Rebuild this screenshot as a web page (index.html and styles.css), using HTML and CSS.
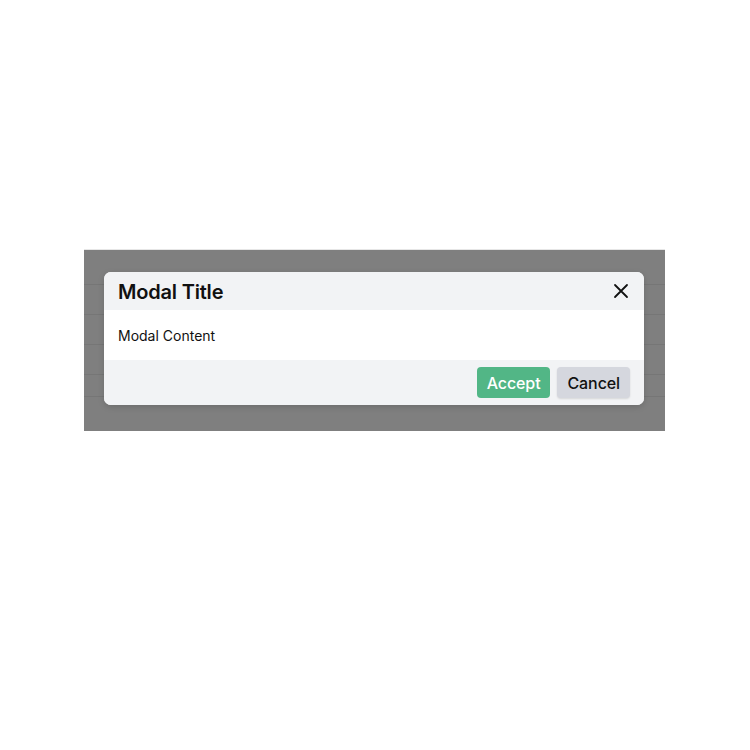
FILE: index.html
```html
<!DOCTYPE html>
<html lang="en">

<head>
    <meta charset="UTF-8">
    <meta name="viewport" content="width=device-width, initial-scale=1.0">
    <title>Modal</title>
    <link rel="stylesheet" href="styles.css">
</head>

<body>
    <div class="stage">
        <!-- table rows behind the backdrop -->
        <div class="rows">
            <div class="row row-head"></div>
            <div class="row"></div>
            <div class="row"></div>
            <div class="row"></div>
            <div class="row row-last"></div>
        </div>

        <div class="backdrop">
            <div class="modal">
                <div class="modal-header">
                    <h2>Modal Title</h2>
                    <button class="close-btn" aria-label="Close">
                        <svg width="16" height="16" viewBox="0 0 16 16">
                            <path d="M2 2 L14 14 M14 2 L2 14" stroke="#111" stroke-width="1.8" stroke-linecap="round" />
                        </svg>
                    </button>
                </div>
                <div class="modal-body">Modal Content</div>
                <div class="modal-footer">
                    <button class="btn btn-accept">Accept</button>
                    <button class="btn btn-cancel">Cancel</button>
                </div>
            </div>
        </div>
    </div>
</body>

</html>
```

FILE: styles.css
```css
:root {
    --panel-bg: #f2f3f5;
    --accept-color: #52b686;
    --cancel-color: #d5d7de;
    --text-color: #111111;
    --font-family: 'Inter', 'Liberation Sans', sans-serif;
}

body {
    margin: 0;
    padding: 249px 0 0 84px;
    font-family: var(--font-family);
    background: #ffffff;
    color: var(--text-color);
}

.stage {
    position: relative;
    width: 581px;
    height: 182px;
    background: #ffffff;
    border-top: 1px solid #e6e6e6;
    box-sizing: border-box;
}

/* --- Rows under the backdrop --- */
.row {
    height: 30px;
    border-bottom: 1px solid #ececec;
    box-sizing: border-box;
}

.row-head {
    height: 35px;
}

.row-last {
    height: 22px;
}

/* --- Backdrop --- */
.backdrop {
    position: absolute;
    inset: 0;
    background: rgba(0, 0, 0, 0.5);
    padding: 22px 21px 0 20px;
}

.modal {
    background: #ffffff;
    border-radius: 7px;
    overflow: hidden;
    box-shadow: 0 2px 6px rgba(0, 0, 0, 0.15);
}

.modal-header {
    display: flex;
    justify-content: space-between;
    align-items: center;
    height: 38px;
    padding: 2px 14px 0;
    box-sizing: border-box;
    background: var(--panel-bg);
}

.modal-header h2 {
    margin: 0;
    font-size: 20px;
    font-weight: 600;
    letter-spacing: -0.2px;
}

.close-btn {
    display: flex;
    background: transparent;
    border: none;
    padding: 0;
    margin: -2px 1px 0 0;
    cursor: pointer;
}

.modal-body {
    padding: 17px 14px 15px;
    font-size: 14px;
    line-height: 18px;
}

.modal-footer {
    display: flex;
    justify-content: flex-end;
    gap: 7px;
    padding: 7px 14px;
    background: var(--panel-bg);
}

.btn {
    height: 31px;
    padding: 0 10px;
    border: none;
    border-radius: 4px;
    font-family: var(--font-family);
    font-size: 16px;
    font-weight: 500;
    letter-spacing: -0.1px;
    cursor: pointer;
}

.btn-accept {
    background: var(--accept-color);
    color: #ffffff;
}

.btn-cancel {
    background: var(--cancel-color);
    color: var(--text-color);
    box-shadow: 0 1px 2px rgba(0, 0, 0, 0.12);
}
```
